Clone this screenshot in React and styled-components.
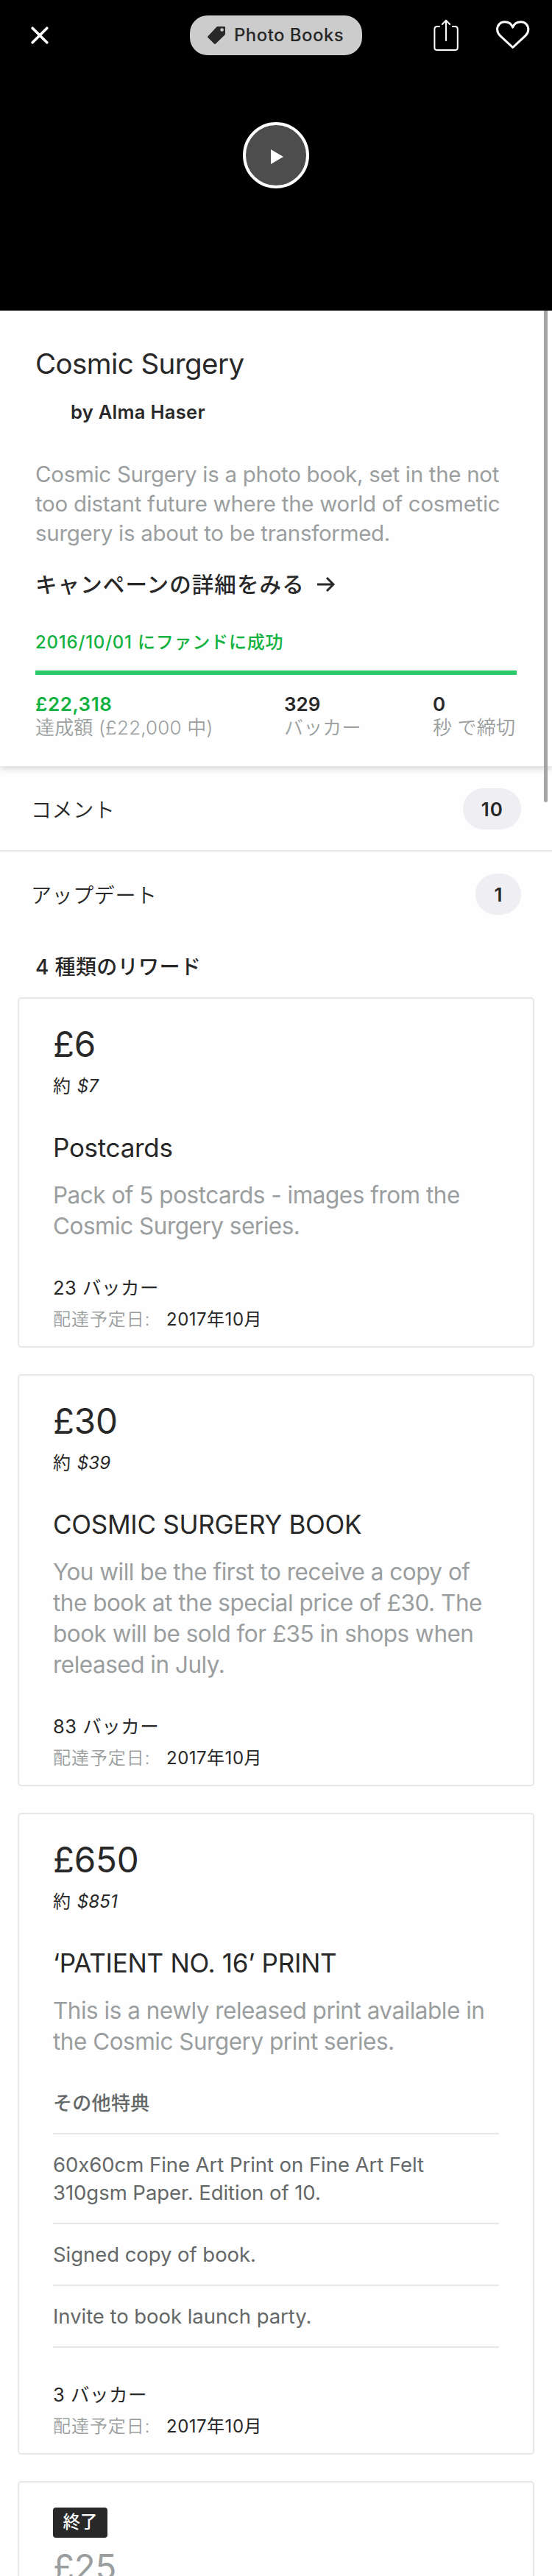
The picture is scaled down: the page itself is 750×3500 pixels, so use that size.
import React from "react";
import styled, { createGlobalStyle } from "styled-components";

const ink = "#282828";
const muted = "#9b9e9e";
const soft = "#656868";
const line = "#e7e7e7";
const paper = "#fefefe";
const green = "#12b240";

const GlobalStyle = createGlobalStyle`
  *, *::before, *::after { box-sizing: border-box; }
  body {
    margin: 0;
    background: ${paper};
    color: ${ink};
    font-family: Inter, "Noto Sans CJK JP", sans-serif;
    font-feature-settings: "calt" 0;
  }
  h1, h2, h3, p, ul { margin: 0; padding: 0; font-weight: 400; }
`;

const Screen = styled.div`
  position: relative;
  width: 750px;
  height: 3500px;
  overflow: hidden;
  background: ${paper};
`;

const Hero = styled.header`
  display: flex;
  flex-direction: column;
  align-items: center;
  height: 422px;
  background: #000;
`;

const TopBar = styled.nav`
  display: grid;
  grid-template-columns: 216px 234px 1fr;
  align-items: center;
  width: 100%;
  height: 96px;
  padding: 0 29px 0 42px;
`;

const TopActions = styled.div`
  display: flex;
  justify-content: flex-end;
  align-items: center;
  gap: 49px;
`;

const CategoryPill = styled.div`
  display: flex;
  align-items: center;
  gap: 12px;
  height: 54px;
  padding-left: 24px;
  border-radius: 24px;
  background: #ccc;
  font-size: 24px;
  font-weight: 500;
  line-height: 30px;
  letter-spacing: 0.45px;
  white-space: nowrap;
`;

const PlayButton = styled.button`
  display: flex;
  align-items: center;
  justify-content: center;
  width: 90px;
  height: 90px;
  margin-top: 70px;
  padding: 3px 0 0 1px;
  border: 4px solid #fff;
  border-radius: 50%;
  background: #4d4d4d;
`;

const ScrollThumb = styled.div`
  position: absolute;
  top: 416px;
  right: 6px;
  width: 5px;
  height: 674px;
  border-radius: 3px;
  background: #a5a5a5;
  clip-path: inset(6px 0 0 0);
`;

const Summary = styled.section`
  position: relative;
  height: 619px;
  padding: 48px 48px 0;
  background: ${paper};
  box-shadow: 0 2px 10px rgba(0, 0, 0, 0.2);
`;

const Title = styled.h1`
  font-size: 38.5px;
  line-height: 48px;
  letter-spacing: -0.57px;
`;

const Byline = styled.p`
  margin-top: 26px;
  padding-left: 48px;
  font-size: 25.5px;
  font-weight: 600;
  line-height: 32px;
  letter-spacing: 0.3px;
`;

const Blurb = styled.p`
  margin-top: 48px;
  color: ${muted};
  font-size: 29.5px;
  line-height: 40px;
  letter-spacing: -0.29px;
  white-space: nowrap;
`;

const DetailsLink = styled.a`
  display: flex;
  align-items: center;
  gap: 17px;
  margin-top: 30px;
  font-size: 29.5px;
  font-weight: 500;
  line-height: 40px;
  letter-spacing: 1.1px;
`;

const Funded = styled.p`
  margin-top: 44px;
  color: ${green};
  font-size: 24px;
  font-weight: 500;
  line-height: 30px;
  letter-spacing: 0.78px;
`;

const Progress = styled.div`
  height: 6px;
  margin-top: 23px;
  background: #2bcb6c;
`;

const Stats = styled.div`
  display: grid;
  grid-template-columns: 338px 202px 1fr;
  margin-top: 24px;
  line-height: 32px;
  white-space: nowrap;
`;

const StatValue = styled.div`
  color: ${(p) => (p.$accent ? green : ink)};
  font-size: 26px;
  font-weight: 600;
  letter-spacing: ${(p) => (p.$accent ? 0.55 : 0)}px;
`;

const StatLabel = styled.div`
  color: ${muted};
  font-size: 26px;
  font-weight: 350;
  letter-spacing: 0.15px;
`;

const NavRow = styled.div`
  display: flex;
  align-items: center;
  justify-content: space-between;
  height: 116px;
  padding: 0 42px;
  font-size: 28px;
  font-weight: 350;
  letter-spacing: 0.6px;
  box-shadow: ${(p) => (p.$divided ? `inset 0 -2px ${line}` : "none")};
`;

const Count = styled.span`
  display: flex;
  align-items: center;
  justify-content: center;
  min-width: 62px;
  height: 56px;
  padding: 0 24px 0 25px;
  border-radius: 28px;
  background: #eeeef3;
  font-size: 26px;
  font-weight: 600;
  letter-spacing: 1px;
`;

const RewardsHeading = styled.h2`
  margin: 23px 48px;
  font-size: 28px;
  font-weight: 500;
  line-height: 36px;
  letter-spacing: 0.38px;
`;

const RewardList = styled.div`
  display: flex;
  flex-direction: column;
  gap: 36px;
  padding: 0 24px;
`;

const Card = styled.article`
  padding: 34px 46px 22px;
  border: 2px solid ${line};
  border-radius: 5px;
`;

const EndedTag = styled.div`
  width: 74px;
  height: 41px;
  margin-bottom: 12px;
  border-radius: 4px;
  background: ${ink};
  color: #fff;
  font-size: 23.5px;
  font-weight: 500;
  line-height: 40px;
  text-align: center;
`;

const Price = styled.div`
  color: ${(p) => (p.$ended ? muted : ink)};
  font-size: 47.5px;
  line-height: 56px;
  letter-spacing: -0.2px;
`;

const Approx = styled.div`
  margin-top: 14px;
  font-size: 24px;
  line-height: 30px;
  word-spacing: 2px;

  em { letter-spacing: 0.2px; }
`;

const RewardTitle = styled.h3`
  margin-top: 47px;
  font-size: 35px;
  line-height: 42px;
  letter-spacing: -0.28px;
  white-space: nowrap;
`;

const RewardText = styled.p`
  margin-top: 23px;
  color: ${muted};
  font-size: 31.5px;
  line-height: 42px;
  letter-spacing: -0.5px;
  white-space: nowrap;
`;

const PerksHeading = styled.div`
  margin: 47px 0 24px;
  color: ${soft};
  font-size: 26px;
  font-weight: 500;
  line-height: 32px;
  letter-spacing: 0.3px;
`;

const Perks = styled.ul`
  list-style: none;
  border-top: 2px solid ${line};
`;

const Perk = styled.li`
  padding: 22px 0;
  border-bottom: 2px solid ${line};
  color: ${soft};
  font-size: 27.5px;
  line-height: 38px;
  letter-spacing: -0.05px;
  white-space: nowrap;
`;

const Backers = styled.div`
  margin-top: ${(p) => (p.$afterPerks ? 48 : 47)}px;
  font-size: 25.5px;
  line-height: 32px;
  letter-spacing: 0.5px;
`;

const Delivery = styled.div`
  display: flex;
  margin: 12px 0 -1px;
  font-size: 24px;
  line-height: 30px;
  white-space: nowrap;
`;

const DeliveryLabel = styled.span`
  width: 154px;
  color: ${muted};
  font-weight: 350;
  letter-spacing: 0.95px;
`;

const DeliveryDate = styled.span`
  letter-spacing: 0.5px;
`;

const CloseIcon = () => (
  <svg width="24" height="24" viewBox="0 0 24 24" fill="none" stroke="#fff" strokeWidth="3.6" strokeLinecap="round">
    <path d="M2.2 2.2 21.8 21.8M21.8 2.2 2.2 21.8" />
  </svg>
);

const TagIcon = () => (
  <svg width="24" height="24" viewBox="0 0 24 24" fill={ink}>
    <path
      fillRule="evenodd"
      d="M13.7 0H22.6Q24 0 24 1.4V10.2Q24 11 23.4 11.6L11 23.6Q10 24.4 9 23.6L.5 15.1Q-.3 14.2.5 13.2L12.4.6Q13 0 13.7 0ZM19.6 2.2A2.3 2.3 0 1 0 19.6 6.8 2.3 2.3 0 0 0 19.6 2.2Z"
    />
  </svg>
);

const ShareIcon = () => (
  <svg width="36" height="44" viewBox="0 0 36 44" fill="none" stroke="#fff" strokeWidth="2" strokeLinecap="round" strokeLinejoin="round">
    <path d="M9 10H6Q2.4 10 2.4 13.6V38.4Q2.4 42 6 42H30.2Q33.8 42 33.8 38.4V13.6Q33.8 10 30.2 10H27" />
    <path d="M18 29V2M12.8 7 18 1.8 23.2 7" />
  </svg>
);

const HeartIcon = () => (
  <svg width="48" height="40" viewBox="0 0 48 40" fill="none" stroke="#fff" strokeWidth="3" strokeLinejoin="round">
    <path d="M23.7 36.5 6.6 20.6C3.8 17.8 2.6 15.4 2.6 12.2 2.6 6 7 1.8 12.8 1.8 18 1.8 21.8 4.2 23.7 9.2 25.6 4.2 29.4 1.8 34.6 1.8 40.4 1.8 44.8 6 44.8 12.2 44.8 15.4 43.6 17.8 40.8 20.6Z" />
  </svg>
);

const PlayIcon = () => (
  <svg width="18" height="20" viewBox="0 0 18 20" fill="#fff">
    <path d="M1 0 18 10 1 20Z" />
  </svg>
);

const ArrowIcon = () => (
  <svg width="24" height="20" viewBox="0 0 24 20" fill="none" stroke={ink} strokeWidth="3">
    <path d="M0 10H21M13 1 22 10 13 19" />
  </svg>
);

const rewards = [
  {
    price: "£6",
    approx: "$7",
    title: "Postcards",
    text: ["Pack of 5 postcards - images from the", "Cosmic Surgery series."],
    backers: 23,
  },
  {
    price: "£30",
    approx: "$39",
    title: "COSMIC SURGERY BOOK",
    text: [
      "You will be the first to receive a copy of",
      "the book at the special price of £30. The",
      "book will be sold for £35 in shops when",
      "released in July.",
    ],
    backers: 83,
  },
  {
    price: "£650",
    approx: "$851",
    title: "‘PATIENT NO. 16’ PRINT",
    text: ["This is a newly released print available in", "the Cosmic Surgery print series."],
    perks: [
      ["60x60cm Fine Art Print on Fine Art Felt", "310gsm Paper. Edition of 10."],
      ["Signed copy of book."],
      ["Invite to book launch party."],
    ],
    backers: 3,
  },
];

const Lines = ({ of }) =>
  of.map((t, i) => (
    <React.Fragment key={t}>
      {i > 0 && <br />}
      {t}
    </React.Fragment>
  ));

const Reward = ({ price, approx, title, text, perks, backers }) => (
  <Card>
    <Price>{price}</Price>
    <Approx>
      約 <em>{approx}</em>
    </Approx>
    <RewardTitle>{title}</RewardTitle>
    <RewardText>
      <Lines of={text} />
    </RewardText>
    {perks && (
      <>
        <PerksHeading>その他特典</PerksHeading>
        <Perks>
          {perks.map((p) => (
            <Perk key={p[0]}>
              <Lines of={p} />
            </Perk>
          ))}
        </Perks>
      </>
    )}
    <Backers $afterPerks={!!perks}>{backers} バッカー</Backers>
    <Delivery>
      <DeliveryLabel>配達予定日:</DeliveryLabel>
      <DeliveryDate>2017年10月</DeliveryDate>
    </Delivery>
  </Card>
);

export default function App() {
  return (
    <Screen lang="ja">
      <GlobalStyle />
      <Hero>
        <TopBar>
          <CloseIcon />
          <CategoryPill>
            <TagIcon />
            Photo Books
          </CategoryPill>
          <TopActions>
            <ShareIcon />
            <HeartIcon />
          </TopActions>
        </TopBar>
        <PlayButton aria-label="Play">
          <PlayIcon />
        </PlayButton>
      </Hero>
      <Summary>
        <Title>Cosmic Surgery</Title>
        <Byline>by Alma Haser</Byline>
        <Blurb>
          <Lines
            of={[
              "Cosmic Surgery is a photo book, set in the not",
              "too distant future where the world of cosmetic",
              "surgery is about to be transformed.",
            ]}
          />
        </Blurb>
        <DetailsLink>
          キャンペーンの詳細をみる
          <ArrowIcon />
        </DetailsLink>
        <Funded>2016/10/01 にファンドに成功</Funded>
        <Progress />
        <Stats>
          <div>
            <StatValue $accent>£22,318</StatValue>
            <StatLabel>達成額 (£22,000 中)</StatLabel>
          </div>
          <div>
            <StatValue>329</StatValue>
            <StatLabel>バッカー</StatLabel>
          </div>
          <div>
            <StatValue>0</StatValue>
            <StatLabel>秒 で締切</StatLabel>
          </div>
        </Stats>
      </Summary>
      <NavRow $divided>
        コメント<Count>10</Count>
      </NavRow>
      <NavRow>
        アップデート<Count>1</Count>
      </NavRow>
      <RewardsHeading>4 種類のリワード</RewardsHeading>
      <RewardList>
        {rewards.map((r) => (
          <Reward key={r.title} {...r} />
        ))}
        <Card>
          <EndedTag>終了</EndedTag>
          <Price $ended>£25</Price>
        </Card>
      </RewardList>
      <ScrollThumb />
    </Screen>
  );
}
